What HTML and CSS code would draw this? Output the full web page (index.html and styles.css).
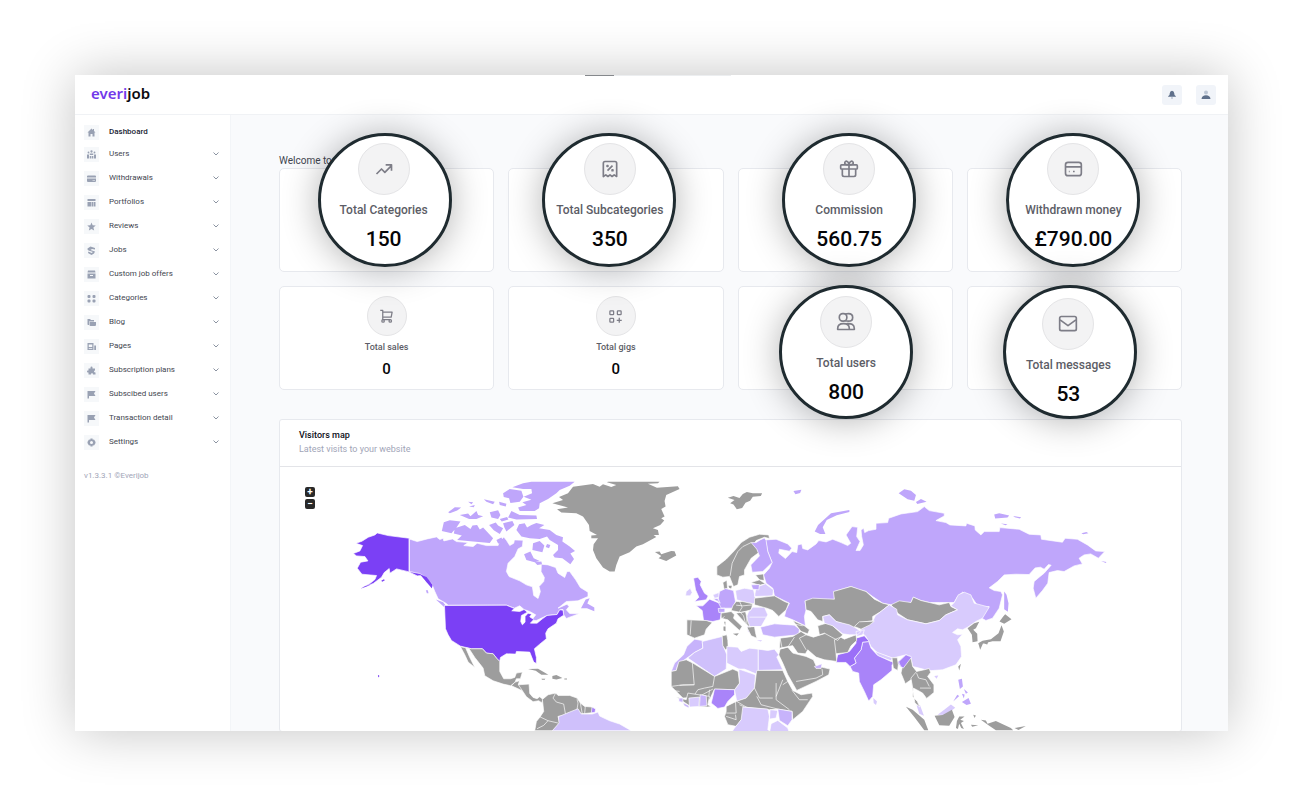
FILE: index.html
```html
<!DOCTYPE html>
<html lang="en">
<head>
<meta charset="utf-8">
<title>Everijob dashboard</title>
<link rel="stylesheet" href="styles.css">
</head>
<body>
<div class="frame">
  <header class="topbar">
    <a class="logo" href="#"><span class="logo-accent">everi</span>job</a>
    <div class="actions">
      <button class="action" type="button" aria-label="Notifications"><svg viewBox="0 0 20 20"><path d="M10 1.500Q14 2 14.500 6.500L15 10Q18 12 18 13.500H2Q2 12 5 10L5.500 6.500Q6 2 10 1.500Z" fill="#5f708b"/><path d="M8.500 14h3v4h-3z" fill="#bcc6d4"/></svg></button>
      <button class="action" type="button" aria-label="Account"><svg viewBox="0 0 20 20"><circle cx="10" cy="5" r="4" fill="#bcc6d4"/><path d="M1 18Q2 10.500 10 10.500T19 18Z" fill="#5f708b"/></svg></button>
    </div>
  </header>
  <div class="body">
    <nav class="sidebar">
      <a class="item item-active" href="#"><span class="tile"><svg viewBox="0 0 18 18"><path d="M9 1 1 9h2v8h4v-5h4v5h4V9h2l-3-3V2h-2v2z"/></svg></span>Dashboard</a>
      <a class="item" href="#"><span class="tile"><svg viewBox="0 0 18 18"><circle cx="9" cy="3" r="2.300"/><circle cx="3" cy="5" r="1.800"/><circle cx="15" cy="5" r="1.800"/><path d="M0 9h4v8H0zM14 9h4v8h-4zM5.500 7h7v3h-7zM5.500 12h3v5h-3zM9.700 12h3v5h-3z"/></svg></span>Users<svg class="chev" viewBox="0 0 8 8"><path d="m1.500 2.500 2.500 2.500 2.500-2.500"/></svg></a>
      <a class="item" href="#"><span class="tile"><svg viewBox="0 0 18 18"><path d="M2 3h14q2 0 2 2v2H0V5q0-2 2-2zM0 9h18v5q0 2-2 2H2q-2 0-2-2zm11 3v1h5v-1z"/></svg></span>Withdrawals<svg class="chev" viewBox="0 0 8 8"><path d="m1.500 2.500 2.500 2.500 2.500-2.500"/></svg></a>
      <a class="item" href="#"><span class="tile"><svg viewBox="0 0 18 18"><path d="M1 2h16v4H1zM1 8h8v9H1zM10 8h3v9h-3zM14 8h3v9h-3z"/></svg></span>Portfolios<svg class="chev" viewBox="0 0 8 8"><path d="m1.500 2.500 2.500 2.500 2.500-2.500"/></svg></a>
      <a class="item" href="#"><span class="tile"><svg viewBox="0 0 18 18"><path d="m9 1 2.300 5.500 6.200.5-4.700 4 1.500 6L9 13.800 3.700 17l1.500-6L.5 7l6.200-.5z"/></svg></span>Reviews<svg class="chev" viewBox="0 0 8 8"><path d="m1.500 2.500 2.500 2.500 2.500-2.500"/></svg></a>
      <a class="item" href="#"><span class="tile"><svg viewBox="0 0 18 18"><path d="M1 5 7 1l9 3v3l-6-1-3 2 9 3-2 4-5 3-7-4 1-3 6 3 3-2-9-3-2-2z"/></svg></span>Jobs<svg class="chev" viewBox="0 0 8 8"><path d="m1.500 2.500 2.500 2.500 2.500-2.500"/></svg></a>
      <a class="item" href="#"><span class="tile"><svg viewBox="0 0 18 18"><path d="M2 1h14l1 4H1zM1 7h16v10H1zm5 3v2h6v-2z" fill-rule="evenodd"/></svg></span>Custom job offers<svg class="chev" viewBox="0 0 8 8"><path d="m1.500 2.500 2.500 2.500 2.500-2.500"/></svg></a>
      <a class="item" href="#"><span class="tile"><svg viewBox="0 0 18 18"><rect x="1" y="2" width="6" height="6" rx="2"/><rect x="11" y="2" width="6" height="6" rx="2"/><rect x="1" y="11" width="6" height="6" rx="2"/><rect x="11" y="11" width="6" height="6" rx="2"/></svg></span>Categories<svg class="chev" viewBox="0 0 8 8"><path d="m1.500 2.500 2.500 2.500 2.500-2.500"/></svg></a>
      <a class="item" href="#"><span class="tile"><svg viewBox="0 0 18 18"><path d="M1 2h5l2 2h6v3H4v7H2q-1 0-1-2zM5 8h13v6q0 2-2 2H7q-2 0-2-2z"/></svg></span>Blog<svg class="chev" viewBox="0 0 8 8"><path d="m1.500 2.500 2.500 2.500 2.500-2.500"/></svg></a>
      <a class="item" href="#"><span class="tile"><svg viewBox="0 0 18 18"><path d="M1 2h12v14H1zm2.500 3v5h7V5zm0 7v1.500h7V12zM14.500 7H18v9h-3.500z" fill-rule="evenodd"/></svg></span>Pages<svg class="chev" viewBox="0 0 8 8"><path d="m1.500 2.500 2.500 2.500 2.500-2.500"/></svg></a>
      <a class="item" href="#"><span class="tile"><svg viewBox="0 0 18 18"><path d="M7 5V3q0-2 2-2t2 2v2h5v4q-2 0-2 2t3 2v4h-5q0-3-2-3t-2 3H3v-4H1q-1-1-1-2t1-2h2V5z"/></svg></span>Subscription plans<svg class="chev" viewBox="0 0 8 8"><path d="m1.500 2.500 2.500 2.500 2.500-2.500"/></svg></a>
      <a class="item" href="#"><span class="tile"><svg viewBox="0 0 18 18"><path d="M1 2h16l-3 5 3 5H4v5H1z"/></svg></span>Subscibed users<svg class="chev" viewBox="0 0 8 8"><path d="m1.500 2.500 2.500 2.500 2.500-2.500"/></svg></a>
      <a class="item" href="#"><span class="tile"><svg viewBox="0 0 18 18"><path d="M1 2h16l-3 5 3 5H4v5H1z"/></svg></span>Transaction detail<svg class="chev" viewBox="0 0 8 8"><path d="m1.500 2.500 2.500 2.500 2.500-2.500"/></svg></a>
      <a class="item" href="#"><span class="tile"><svg viewBox="0 0 18 18"><path d="M7 1h4l.5 2.500L14 3l2 3 1 2v2l-1 2-2 3-2.500-.5L11 17H7l-.5-2.500L4 15l-2-3-1-2V8l1-2 2-3 2.500.5zm2 5a3 3 0 1 0 0 6 3 3 0 0 0 0-6z" fill-rule="evenodd"/></svg></span>Settings<svg class="chev" viewBox="0 0 8 8"><path d="m1.500 2.500 2.500 2.500 2.500-2.500"/></svg></a>
      <p class="version">v1.3.3.1 ©Everijob</p>
    </nav>
    <main class="content">
      <p class="welcome">Welcome to</p>
      <section class="cards">
        <article class="card"><div class="lens lens-a">
          <span class="badge"><svg viewBox="0 0 24 24"><path d="m3 18 6-6 4 4 8-8M14 7h7v7"/></svg></span>
          <h3>Total Categories</h3><strong>150</strong></div></article>
        <article class="card"><div class="lens lens-b">
          <span class="badge"><svg viewBox="0 0 24 24"><path d="M4 21V5q0-2 2-2h12q2 0 2 2v16l-3-2-2.500 2L12 19l-2.500 2L7 19zM9 14l6-6"/><path d="M8.500 8h1v1h-1zM14.500 13h1v1h-1z"/></svg></span>
          <h3>Total Subcategories</h3><strong>350</strong></div></article>
        <article class="card"><div class="lens lens-c">
          <span class="badge"><svg viewBox="0 0 24 24"><rect x="2" y="7" width="20" height="5" rx="1"/><path d="M4 12v7q0 2 2 2h12q2 0 2-2v-7M12 7v14M12 7Q6 7 7 4q1.500-3 4 0zM12 7q6 0 5-3-1.500-3-4 0z"/></svg></span>
          <h3>Commission</h3><strong>560.75</strong></div></article>
        <article class="card"><div class="lens lens-d">
          <span class="badge"><svg viewBox="0 0 24 24"><rect x="3" y="4" width="19" height="16" rx="3"/><path d="M3 9.500h19M7 15h1M12 15h2"/></svg></span>
          <h3>Withdrawn money</h3><strong>£790.00</strong></div></article>
        <article class="card card-plain">
          <span class="badge"><svg viewBox="0 0 24 24"><path d="M2 2h4v15h12M6 5h15l-1.500 8H6"/><circle cx="6.500" cy="19" r="2"/><circle cx="18" cy="19" r="2"/></svg></span>
          <h3>Total sales</h3><strong>0</strong></article>
        <article class="card card-plain">
          <span class="badge"><svg viewBox="0 0 24 24"><rect x="3" y="3" width="6" height="6" rx="1"/><rect x="15" y="3" width="6" height="6" rx="1"/><rect x="3" y="15" width="6" height="6" rx="1"/><path d="M14 18h8M18 14v8"/></svg></span>
          <h3>Total gigs</h3><strong>0</strong></article>
        <article class="card"><div class="lens lens-e">
          <span class="badge"><svg viewBox="0 0 24 24"><rect x="4" y="2" width="9" height="9" rx="4"/><path d="M11 2.500q1.500-.5 4-.5 5 0 5 4.500T15 11q-2.500 0-4-.5M2 21v-1q0-6 7-6t7 6v1zM13 14q9-1 9 6v1h-6"/></svg></span>
          <h3>Total users</h3><strong>800</strong></div></article>
        <article class="card"><div class="lens lens-f">
          <span class="badge"><svg viewBox="0 0 24 24"><rect x="2" y="3" width="20" height="17" rx="2"/><path d="m2.500 7 9.500 7 9.500-7"/></svg></span>
          <h3>Total messages</h3><strong>53</strong></div></article>
      </section>
      <section class="panel">
        <div class="panel-head"><h2>Visitors map</h2><p>Latest visits to your website</p></div>
        <div class="map">
          <div class="zoom"><button type="button" aria-label="Zoom in">+</button><button type="button" aria-label="Zoom out">−</button></div>
          <svg class="world" viewBox="280 467 902 264" role="img" aria-label="World map of visitors">
            <!-- North America -->
            <g transform="translate(340 475) scale(.33333)">
              <path class="c3" d="M208 192 232 200 262 192 290 186 300 194 310 190 312 198 338 192 350 200 385 203 372 212 400 215 412 205 440 212 475 212 478 202 492 186 500 196 510 212 522 205 524 195 550 196 548 215 535 222 525 245 505 265 500 290 508 305 540 318 560 330 578 336 582 362 595 371 602 350 598 335 612 320 614 308 604 290 605 268 625 270 648 278 655 295 675 308 682 290 690 290 708 315 722 338 745 352 745 365 715 378 680 380 655 400 682 388 688 395 680 405 690 416 718 417 690 427 680 431 672 420 670 404 660 405 652 419 622 422 590 437 575 437 588 420 570 410 553 404 540 393 524 400 500 391 325 391 318 385 295 372 285 350 275 325 258 310 240 298 208 290Z"/>
              <path class="c3 isle" d="M724 400 738 374 750 370 743 386 764 398 764 409 742 400ZM288 374 310 382 325 402 312 396ZM258 346l6 0 2 9-5 0z"/>
              <path class="c3 isle" d="M530 165 538 148 555 145 562 158 575 150 590 144 614 150 598 160 630 165 650 180 670 187 668 200 690 215 706 228 692 236 703 252 692 268 668 250 645 248 640 240 655 225 655 210 630 195 622 185 600 192 570 190 545 185Z"/>
              <path class="c3 isle" d="M575 20H705L690 32 660 45 650 55 625 72 600 85 598 100 585 108 540 108 535 98 560 90 548 82 575 74 552 65 577 55 575 42 550 42 518 37 550 25Z"/>
              <path class="c3 isle" d="M490 55 510 42 545 47 551 65 540 80 512 84 508 70 492 66ZM515 108 540 120 590 122 592 132 530 134 505 128ZM312 142 330 136 362 140 350 158 335 175 306 168ZM345 160 375 150 392 162 398 152 412 150 420 164 430 158 460 190 450 204 400 200 352 195 366 182 342 176ZM325 112 345 97 364 98 352 107 330 115ZM360 120 385 116 392 124 410 108 415 120 430 124 410 132 388 132ZM432 73 465 80 460 88 440 80ZM478 80 500 86 498 95 480 90ZM450 112 475 106 482 120 475 132 455 128ZM448 150 468 143 475 152 490 160 480 177 462 166ZM490 145 518 138 524 150 500 170 494 158ZM580 205 600 198 614 212 608 232 578 225ZM553 238 572 230 582 250 600 258 585 262 560 255ZM622 207 632 210 628 220 618 216ZM470 195 485 188 492 202 475 206ZM385 80 400 82 395 88zM388 95 405 90 402 97zM480 132 502 126 506 134 486 140zM585 262l20-2 2 8-14 2z"/>
              <path class="c5" d="M208 190 145 182 112 174 105 180 85 187 66 199 48 205 68 212 60 228 40 236 50 243 75 245 84 258 62 262 52 280 66 298 110 302 105 314 90 326 62 341 100 326 125 307 133 293 148 281 150 295 170 282 208 291 232 303 245 302 260 322 276 340 278 332 258 308 240 296 208 290Z"/>
              <path class="c5 isle" d="M124 318l8-5 3 3-8 5zM114 600l5 4-4 4zM95 328 82 334 62 342 75 334zM240 298 260 306 278 330 276 340 262 324z"/>
              <path class="c5" d="M314 392 500 391 524 401 516 408 540 410 553 404 563 412 545 422 543 440 548 450 556 442 556 425 565 415 576 418 570 426 582 434 572 445 592 445 608 432 622 422 652 419 660 405 670 406 672 421 655 432 650 445 625 462 618 475 620 492 600 508 584 522 590 548 590 566 582 562 570 532 530 530 528 538 500 537 482 548 480 560 470 550 460 537 440 535 428 522 395 522 362 514 335 497 325 480 317 462Z"/>
              <path class="na" d="M362 516 395 522 428 522 440 535 460 537 470 550 480 560 480 590 492 612 512 612 525 608 530 595 548 592 542 612 530 612 526 622 513 633 490 628 460 618 435 603 430 580 405 548 388 522 378 520 390 548 405 578 385 562 375 540Z"/>
              <path class="na" d="M526 622 540 618 536 630 568 628 570 656 580 668 592 672 600 666 610 674 606 684 597 678 580 681 560 666 548 648 535 642 515 633Z"/>
              <path class="na isle" d="M565 583 595 582 626 600 605 600 588 588ZM638 604 650 601 668 610 650 614 638 612ZM605 612l12 0-2 3-8 0zM674 611h8v3h-8z"/>
              <path class="na" d="M608 674 625 660 648 655 655 662 690 662 712 670 722 685 735 695 757 697 764 704 757 714 720 718 712 705 690 722 675 722 655 725 660 745 640 768 585 768 590 740 600 728 612 710Z"/>
              <path class="line" d="M648 655 640 670 650 682 672 688 678 722M712 674 715 685 712 705M722 685 728 718M737 695 735 716M600 726 625 738 655 745M625 738 612 752 592 762M540 618 536 630 548 648"/>
              <path class="c4" d="M757 697 768 703 766 713 755 714Z"/>
              <path class="line" d="M208 192V290"/>
            </g>
            <!-- Greenland, Iceland, Brazil -->
            <g transform="translate(520 475) scale(.33333)">
              <path class="na isle" d="M98 85 130 75 118 66 145 55 160 35 220 27 240 35 250 28 275 36 290 30 262 22 265 20H420L415 25 385 26 412 38 475 34 480 42 440 60 435 78 438 95 425 102 435 125 425 130 434 137 422 150 400 160 415 165 418 180 402 180 410 186 370 208 350 215 330 232 300 245 290 270 285 290 270 290 250 278 230 250 220 225 222 208 235 190 215 190 215 182 232 180 210 168 208 150 190 125 170 115 125 113 112 103 145 98Z"/>
              <path class="na isle" d="M406 231 420 230 425 238 455 228 465 229 470 242 440 258 417 250 425 243Z"/>
              <path class="c2" d="M98 768 118 745 116 726 150 712 175 702 185 718 218 718 235 712 240 724 270 738 300 748 335 768Z"/>
            </g>
            <!-- Russia, China and East Asia -->
            <g transform="translate(830 480) scale(.33333)">
              <path class="c3" d="M-192 180-160 178-125 192-113 205-120 214-150 208-152 220-132 236-112 215-98 218-95 195-83 192-80 206-65 210-40 192-32 182-10 186 10 178 35 188 55 197 64 190 50 165 68 140 85 142 82 170 92 185 80 212 92 212 102 195 97 170 95 150 103 145 106 158 118 152 140 148 140 130 175 128 178 115 215 102 265 95 285 80 300 92 345 100 345 108 320 122 350 128 362 135 410 138 412 130 437 138 438 150 455 165 465 155 510 155 512 143 570 148 600 163 635 165 637 178 700 187 708 175 745 178 775 195 800 213 827 215 808 235 785 222 765 225 750 235 760 252 735 258 705 275 685 272 660 278 656 310 640 332 620 355 612 325 615 305 630 292 645 280 666 256 658 254 645 268 634 262 618 264 600 284 560 283 525 285 505 305 480 324 495 332 515 335 520 345 510 385 490 415 470 422 458 415 462 402 480 380 450 385 430 355 400 337 385 350 375 368 330 368 300 368 275 362 252 352 245 368 185 375 160 370 130 350 110 335 90 330 65 320 15 335 15 360-73 363-70 390-75 410-72 438-110 420-135 410-130 390-120 370-165 348-170 325-190 310-198 285-180 265-172 248-185 215Z"/>
              <path class="c3 isle" d="M208 40 225 28 245 32 260 45 255 62 235 58ZM260 66 275 57 292 65 264 72ZM495 104 510 100 540 107 535 113 498 116ZM552 108l24 4-4 4-15-4zM515 131l20 2-6 3zM757 160 772 156 778 160 762 163zM816 243l16 3-2 3zM-44 155-34 135-15 118 5 100 60 90 60 96 22 106-8 120-20 142-12 162-28 162ZM525 335 532 345 538 370 536 396 525 388ZM-108 33l24-4-4 10-14 4z"/>
              <path class="na" d="M-73 363-50 355 15 358 12 335 65 320 110 335 135 358 160 370 180 375 155 395 130 410 130 423 90 428 75 445 50 435 20 425 0 405-20 410-20 425-35 420-55 395-70 390Z"/>
              <path class="na" d="M185 375 210 363 245 368 252 352 275 362 300 368 330 375 360 368 365 380 385 390 350 405 330 422 290 432 235 420 205 400Z"/>
              <path class="c1" d="M90 452 130 425 138 408 180 375 202 388 205 405 235 420 290 432 330 422 350 405 385 390 365 378 375 368 387 345 405 337 425 345 435 370 480 382 460 415 440 425 415 442 400 450 385 447 370 458 385 465 400 463 385 480 395 500 397 530 380 555 340 570 300 573 270 565 250 560 245 535 230 525 190 535 145 520 125 500 110 470Z"/>
              <path class="na" d="M75 440 90 426 135 424 120 436 95 448Z"/>
              <path class="c1 isle" d="M315 589l12-2-5 10zM132 655 143 665 140 676 133 670ZM262 677 272 676 284 708 270 702ZM325 705 345 690 365 674 378 684 350 706Z"/>
              <path class="c1" d="M137 515 190 535 185 543 145 528Z"/>
              <path class="c4" d="M100 487 118 485 125 505 145 527 185 545 207 545 230 525 245 530 222 567 207 552 188 555 188 572 155 600 133 615 130 650 118 664 105 635 90 605 88 580 70 575 62 560 80 550 75 535 95 510Z"/>
              <path class="c45" d="M80 475 105 468 120 485 100 487 95 510 75 535 80 550 62 560 50 548 20 548 25 525 60 515 80 490Z"/>
              <path class="na" d="M188 534 204 534 207 555 205 572 192 565ZM225 535 245 535 250 560 262 575 285 570 300 566 304 578 295 590 314 615 314 638 292 656 280 640 262 630 252 625 250 650 264 665 272 682 257 670 245 600 228 612 215 580Z"/>
              <path class="c4" d="M208 546 230 525 247 532 222 565 214 560Z"/>
              <path class="line" d="M262 575 245 595 250 625M262 580 268 595 290 600 300 620M272 625 305 625"/>
              <path class="na isle" d="M230 681 250 690 285 720 297 752H285L255 712ZM316 708 340 706 368 690 376 712 360 738 330 737ZM383 724 390 710 406 710 393 720 404 724 395 730 404 748 396 745 390 732 386 748 380 745 382 732ZM432 705l8 2-4 8zM455 720 470 722 475 732 500 724 545 745 552 752H500L480 738ZM425 735l22 2-18 4zM387 560l8-8-5 20zM415 445 435 430 450 426 440 445 432 450 444 462 445 484 430 487 428 465ZM522 410 528 403 547 418 525 432 511 425ZM517 436 524 455 514 484 490 484 460 492 447 490 460 483 485 478 508 460ZM447 490l14 2-8 18zM462 490l16-5-4 9zM556 745l34-6-22 12z"/>
              <path class="c3 isle" d="M387 600 398 597 401 620 392 628ZM404 628l12 10-6 4zM398 667 418 655 425 672 412 676ZM384 645l6 4-18 16zM398 642l8 2-2 12z"/>
            </g>
            <!-- Europe, Africa, Middle East -->
            <g transform="translate(660 520) scale(.33333)">
              <path class="na" d="M172 140 200 118 225 92 245 68 270 52 300 43 328 45 330 56 315 52 290 62 285 70 298 98 275 115 255 150 255 165 240 170 235 195 222 200 210 170 190 172 172 165Z"/>
              <path class="c3" d="M275 68 290 68 302 60 315 54 320 62 325 95 338 128 310 155 278 157 274 135 300 108 292 88Z"/>
              <path class="line" d="M212 168 218 130 235 95 250 80 275 68"/>
              <path class="na" d="M190 188 202 181 204 205 194 210ZM288 165 312 162 314 182 300 180ZM274 188 300 180 318 192 300 196Z"/>
              <path class="c4" d="M102 175 115 172 125 185 122 195 135 220 146 228 140 240 105 245 118 232 108 210ZM110 258 130 258 150 238 180 250 188 262 182 300 160 305 132 302 128 272Z"/>
              <path class="c1" d="M80 215 92 205 98 218 92 228 78 228ZM228 212 255 205 282 210 288 235 285 252 260 248 232 240ZM290 202 318 192 342 210 340 228 285 230ZM272 262 315 262 325 285 305 320 278 320 285 350 265 335 262 290ZM160 225 178 218 180 232 165 235Z"/>
              <path class="c3" d="M180 215 198 206 222 212 228 245 220 265 185 265 175 245ZM275 195 300 194 298 210 280 208ZM176 266 196 265 196 277 178 278ZM160 236l16 0 6 14z"/>
              <path class="na" d="M285 235 345 228 375 245 388 250 380 270 358 290 340 272 322 265 285 255ZM82 300 140 302 158 308 140 328 135 345 105 355 82 345ZM185 280 215 275 225 285 222 295 248 320 240 332 205 300 185 295ZM220 258 230 245 250 245 280 252 275 270 245 278 215 272ZM230 280 258 275 265 305 272 322 262 315ZM262 322 285 320 288 338 292 355 275 348Z"/>
              <path class="na isle" d="M192 320l6 0 0 14-6-2zM194 306l4 0-1 12zM220 342l18-2-6 8zM207 198l10 0-2 8-6-2z"/>
              <path class="line" d="M262 290 262 335M240 244 248 262 240 275M270 292 320 292M270 320 310 320M95 302 92 345M285 255 270 275M182 300 195 290M230 256 250 258 280 255M240 275 252 288 258 310"/>
              <path class="c25" d="M303 322 345 312 405 316 420 328 418 345 385 348 345 352 310 345Z"/>
              <path class="c1 isle" d="M292 361l16 0-4 4zM360 360l12-3-6 7z"/>
              <path class="na" d="M400 302 435 318 450 330 445 342 425 335ZM362 355 400 350 425 335 440 345 462 352 500 340 540 350 555 358 590 345 592 362 575 378 565 398 530 402 532 425 495 420 470 412 445 390 438 402 415 400 400 378 360 385Z"/>
              <path class="na" d="M475 318 508 308 520 318 550 345 535 362 495 340 480 345Z"/>
              <path class="c1" d="M490 290 510 285 530 305 570 315 590 325 605 335 595 345 570 345 550 342 520 318 495 310ZM590 335 615 330 610 345 592 350Z"/>
              <path class="na" d="M362 388 385 382 400 400 440 410 462 420 470 438 512 448 508 465 470 485 412 512 385 465 370 430 358 405Z"/>
              <path class="c25" d="M465 440 488 432 485 446 470 446Z"/>
              <path class="line" d="M362 355 368 385 400 378M385 382 405 352M440 345 420 355 440 390M525 360 530 402M410 485 470 475 490 465 488 448M560 345 525 360M400 312 430 318"/>
              <path class="c25" d="M35 455 45 430 72 405 82 380 105 358 128 362 130 385 105 398 75 420 55 435 50 452Z"/>
              <path class="c2" d="M105 398 130 385 128 365 188 350 192 380 202 405 200 448 165 470 85 415ZM296 388 325 392 345 388 358 405 352 412 370 450 296 452Z"/>
              <path class="na" d="M188 348 202 345 205 362 206 385 198 390 190 378Z"/>
              <path class="c1" d="M202 380 235 382 245 395 270 385 296 388 296 465 255 448 238 448 202 430ZM238 448 288 465 285 505 262 535 232 545 225 510 240 490Z"/>
              <path class="na" d="M35 455 50 452 58 425 80 420 100 430 165 470 220 448 236 455 240 490 225 510 165 508 150 540 140 530 70 535 35 500Z"/>
              <path class="na" d="M290 465 292 452 370 452 385 485 400 512 425 525 458 520 460 530 430 575 400 600 398 575 355 568 330 570 255 562 250 595 230 620 205 615 195 590 200 575 200 560 230 545 260 535 285 505Z"/>
              <path class="line" d="M98 425 104 495 60 497M104 495 70 495 35 500M165 470 160 500 135 505 115 510 105 525M150 510 145 555M35 512 60 515M200 580 230 580 228 545M228 585 230 600 200 590M232 545 265 565M285 505 300 535 340 535M350 490 350 540 390 570M370 480 350 530M398 512 420 540 445 540M292 530 305 555 355 568M240 555 255 562M385 485 370 495M160 508 110 535M62 535 50 520 35 520"/>
              <path class="na" d="M50 532 80 540 85 520 150 530 145 555 155 560 145 562 90 558Z"/>
              <path class="c1" d="M88 535 120 532 118 560 90 562ZM250 562 325 568 330 590 325 630 340 640H215L225 625 245 600ZM332 570 355 572 350 595 330 598ZM335 612 355 602 385 625 390 640H330Z"/>
              <path class="c25" d="M122 525 140 528 142 558 120 560ZM58 535 70 535 70 548 58 545ZM70 548 88 558 88 565 74 558Z"/>
              <path class="c4" d="M165 508 225 510 225 525 205 545 195 562 175 566 155 550 160 530Z"/>
              <path class="c25" d="M355 568 398 575 398 600 385 618 360 602Z"/>
              <!-- Svalbard -->
              <path class="na isle" d="M205-67 222-72 240-66 250-78 262-84 280-80 308-80 304-72 280-70 272-58 258-52 248-36 232-32 222-46 212-50 225-60Z"/>
            </g>
          </svg>
        </div>
      </section>
    </main>
  </div>
</div>
</body>
</html>
```

FILE: styles.css
```css
* { box-sizing: border-box; margin: 0; padding: 0; }
body {
  height: 100vh;
  padding: 75px;
  background: #fff;
  color: #3f4650;
  font: 8px/12px Roboto, "Liberation Sans", sans-serif;
  overflow: hidden;
}
a { color: inherit; text-decoration: none; }
button { border: 0; font: inherit; }
.frame {
  display: flex;
  flex-direction: column;
  height: 100%;
  overflow: hidden;
  background: #fff;
  box-shadow: 0 0 50px rgba(0, 0, 0, .24);
}
.topbar {
  display: flex;
  flex: none;
  align-items: center;
  justify-content: space-between;
  height: 40px;
  padding: 0 12px 0 16px;
  border-bottom: 1px solid #f0f2f5;
  background:
    linear-gradient(#85888c, #85888c) 510px 0 / 29px 1px no-repeat,
    linear-gradient(#eceef0, #eceef0) 539px 0 / 117px 1px no-repeat,
    #fff;
}
.logo { padding-bottom: 4px; color: #0b0b10; font: 600 15px/20px "Noto Sans", sans-serif; }
.logo-accent { color: #7239ea; }
.actions { display: flex; gap: 14px; }
.action {
  display: grid;
  place-items: center;
  width: 20px;
  height: 20px;
  border-radius: 3px;
  background: #f1f4f9;
}
.action svg { width: 10px; height: 10px; }
.body { display: flex; flex: 1; min-height: 0; }
.sidebar {
  flex: none;
  width: 155px;
  padding: 7px 10px 0 9px;
}
.item { display: flex; align-items: center; height: 24px; }
.item-active { height: 20px; color: #181c32; font-weight: 500; }
.tile {
  display: grid;
  place-items: center;
  width: 15px;
  height: 15px;
  margin-right: 10px;
  background: #f6f8fa;
}
.tile svg { width: 9px; height: 9px; fill: #99a1b3; }
.chev {
  width: 8px;
  height: 8px;
  margin-left: auto;
  fill: none;
  stroke: #8b93a1;
  stroke-width: 1;
}
.version { margin-top: 16px; color: #a1a5b7; }
.content {
  flex: 1;
  min-width: 0;
  padding: 39px 46px 0 48px;
  border-left: 1px solid #f3f5f8;
  background: #f9fafc;
}
.welcome { font-size: 10px; line-height: 14px; }
.cards {
  display: grid;
  grid-template-columns: repeat(4, 1fr);
  grid-auto-rows: 104px;
  gap: 14px;
}
.card {
  position: relative;
  border: 1px solid #e7e9ee;
  border-radius: 5px;
  background: #fff;
  text-align: center;
}
.card h3 { color: #5c5d66; font-weight: 500; }
.card strong { color: #050507; font-weight: 500; }
.badge {
  display: grid;
  place-items: center;
  border: 1px solid #e4e4e6;
  border-radius: 50%;
  background: #f3f3f4;
}
.badge svg {
  fill: none;
  stroke: #7d7d87;
  stroke-width: 2;
  stroke-linejoin: round;
}
.card-plain { display: flex; flex-direction: column; align-items: center; padding-top: 9px; }
.card-plain .badge { width: 40px; height: 40px; }
.card-plain svg { width: 15px; height: 15px; }
.card-plain h3 { margin-top: 4px; font-size: 9px; line-height: 14px; }
.card-plain strong { margin-top: 6px; font-size: 15px; line-height: 18px; }
.lens {
  position: absolute;
  z-index: 2;
  top: -36px;
  display: flex;
  flex-direction: column;
  align-items: center;
  width: 134px;
  height: 134px;
  padding-top: 7px;
  border: 3px solid #1f2b30;
  border-radius: 50%;
  background: #fff;
  box-shadow: 0 2px 36px rgba(0, 0, 0, .3);
  white-space: nowrap;
}
.lens-a { left: calc(50% - 69px); padding-right: 2px; }
.lens-b { left: calc(50% - 74px); padding-left: 2px; }
.lens-c { left: calc(50% - 63px); }
.lens-d { left: calc(50% - 68px); }
.lens-e { top: -2px; left: calc(50% - 66px); padding-top: 8px; }
.lens-f { top: -2px; left: calc(50% - 71px); padding-top: 10px; padding-right: 4px; }
.lens .badge { width: 52px; height: 52px; }
.lens svg { width: 20px; height: 20px; }
.lens h3 { margin-top: 7px; font-size: 12px; line-height: 16px; }
.lens strong { margin-top: 9px; font-size: 21px; line-height: 24px; }
.panel {
  margin-top: 29px;
  border: 1px solid #e7e9ee;
  border-radius: 3px;
  background: #fff;
}
.panel-head { padding: 8px 19px 9px; border-bottom: 1px solid #e3e4e8; }
.panel-head h2 { color: #0d0f18; font-size: 9px; font-weight: 500; line-height: 14px; }
.panel-head p { color: #a1a5b7; font-size: 9px; line-height: 15px; }
.map { position: relative; }
.zoom { position: absolute; top: 20px; left: 25px; display: grid; gap: 2px; }
.zoom button {
  width: 10px;
  height: 10px;
  border-radius: 2px;
  background: #292929;
  color: #fff;
  font-size: 10px;
  font-weight: 700;
  line-height: 10px;
}
.world { display: block; width: 100%; height: auto; }
.world path { stroke: #fff; stroke-width: 2; stroke-linejoin: round; }
.world .isle { stroke: none; }
.world .na { fill: #9d9d9d; }
.world .c1 { fill: #d8cbfd; }
.world .c2 { fill: #cfc0fb; }
.world .c25 { fill: #c7b3fb; }
.world .c3 { fill: #bfa6fb; }
.world .c4 { fill: #a984f9; }
.world .c45 { fill: #9b6ff8; }
.world .c5 { fill: #7b40f5; }
.world .line { fill: none; }
```
